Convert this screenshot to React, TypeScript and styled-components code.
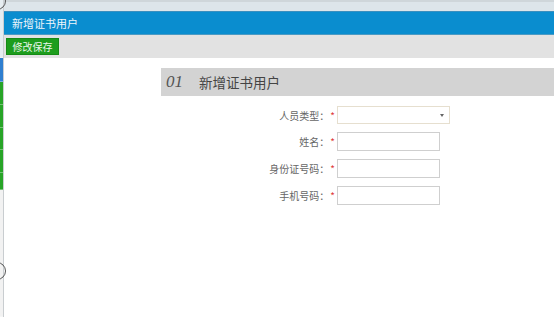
import styled, { createGlobalStyle } from 'styled-components'

const GlobalStyle = createGlobalStyle`
  html, body {
    margin: 0;
    padding: 0;
    background: #fff;
    font-family: 'Microsoft YaHei', 'Noto Sans CJK SC', 'Liberation Sans', sans-serif;
  }
`

const FIELDS = [
  { label: '人员类型', kind: 'select' },
  { label: '姓名', kind: 'text' },
  { label: '身份证号码', kind: 'text' },
  { label: '手机号码', kind: 'text' },
]

export default function App() {
  return (
    <>
      <GlobalStyle />
      <Page>
        <Ring style={{ top: -8 }} />
        <Ring style={{ top: 262 }} />

        <SideStrip>
          <Segment $tone="#e6edf1" $h={58} />
          <Segment $tone="#2f7fd0" $h={24} />
          <Segment $tone="#27a427" $h={23} />
          <Segment $tone="#27a427" $h={23} />
          <Segment $tone="#27a427" $h={22} />
          <Segment $tone="#27a427" $h={23} />
          <Segment $tone="#27a427" $h={17} />
          <Segment $tone="#f2f2f2" $h={127} />
        </SideStrip>

        <Main>
          <TopStrip />
          <TitleBar>新增证书用户</TitleBar>
          <Toolbar>
            <SaveButton type="button">修改保存</SaveButton>
          </Toolbar>

          <Content>
            <SectionHead>
              <SectionNo>01</SectionNo>
              <SectionTitle>新增证书用户</SectionTitle>
            </SectionHead>

            <Form>
              {FIELDS.map(f => (
                <Row key={f.label}>
                  <Label>
                    {f.label}：<Star>*</Star>
                  </Label>
                  {f.kind === 'select' ? (
                    <SelectBox>
                      <Caret />
                    </SelectBox>
                  ) : (
                    <TextInput type="text" />
                  )}
                </Row>
              ))}
            </Form>
          </Content>
        </Main>
      </Page>
    </>
  )
}

const Page = styled.div`
  position: relative;
  display: flex;
  width: 554px;
  height: 317px;
  overflow: hidden;
`

const Ring = styled.div`
  position: absolute;
  left: -12px;
  width: 16px;
  height: 16px;
  border: 1.5px solid #555;
  border-radius: 50%;
  z-index: 2;
`

const SideStrip = styled.div`
  display: flex;
  flex-direction: column;
  width: 3px;
  flex-shrink: 0;
`

const Segment = styled.div<{ $tone: string; $h: number }>`
  height: ${p => p.$h}px;
  background: ${p => p.$tone};
  border-bottom: 1px solid rgba(255, 255, 255, 0.35);
  box-sizing: border-box;
`

const Main = styled.div`
  flex: 1;
  display: flex;
  flex-direction: column;
  border-left: 1px solid #c9cdd0;
`

const TopStrip = styled.div`
  height: 11px;
  background: #dde5ea;
  border-top: 2px solid #cfd6da;
  box-sizing: border-box;
`

const TitleBar = styled.div`
  height: 24px;
  background: #0a8dcf;
  border-top: 1px solid #3a8fbf;
  border-bottom: 1px solid #4a9ac4;
  box-sizing: border-box;
  color: #eef6fb;
  font-size: 11px;
  line-height: 22px;
  padding-left: 8px;
`

const Toolbar = styled.div`
  height: 23px;
  background: #e2e2e2;
  display: flex;
  align-items: center;
  padding-left: 2px;
`

const SaveButton = styled.button`
  width: 53px;
  height: 17px;
  padding: 0;
  border: 1px solid #168a16;
  background: #1d9d1d;
  color: #eaf6ea;
  font-family: inherit;
  font-size: 10px;
  line-height: 15px;
  cursor: pointer;
`

const Content = styled.div`
  flex: 1;
  padding: 10px 0 0 157px;
  background: #fff;
`

const SectionHead = styled.div`
  height: 28px;
  background: #d3d3d3;
  display: flex;
  align-items: center;
  padding-left: 5px;
`

const SectionNo = styled.span`
  font-family: 'Liberation Serif', serif;
  font-style: italic;
  font-size: 17px;
  color: #555;
  width: 33px;
`

const SectionTitle = styled.span`
  font-size: 13.5px;
  color: #444;
`

const Form = styled.div`
  display: flex;
  flex-direction: column;
  gap: 8px;
  margin-top: 10px;
`

const Row = styled.div`
  display: grid;
  grid-template-columns: 176px auto;
  align-items: center;
`

const Label = styled.label`
  text-align: right;
  font-size: 10px;
  color: #666;
  padding-right: 2px;
`

const Star = styled.span`
  color: #e03a3a;
  margin-left: 1px;
`

const SelectBox = styled.div`
  position: relative;
  width: 113px;
  height: 18px;
  border: 1px solid #e6dfcf;
  box-sizing: border-box;
  background: #fff;
`

const Caret = styled.span`
  position: absolute;
  right: 5px;
  top: 7px;
  width: 0;
  height: 0;
  border-left: 2.5px solid transparent;
  border-right: 2.5px solid transparent;
  border-top: 3px solid #666;
`

const TextInput = styled.input`
  width: 103px;
  height: 19px;
  box-sizing: border-box;
  border: 1px solid #cfcfcf;
  padding: 0 3px;
  outline: none;
`
